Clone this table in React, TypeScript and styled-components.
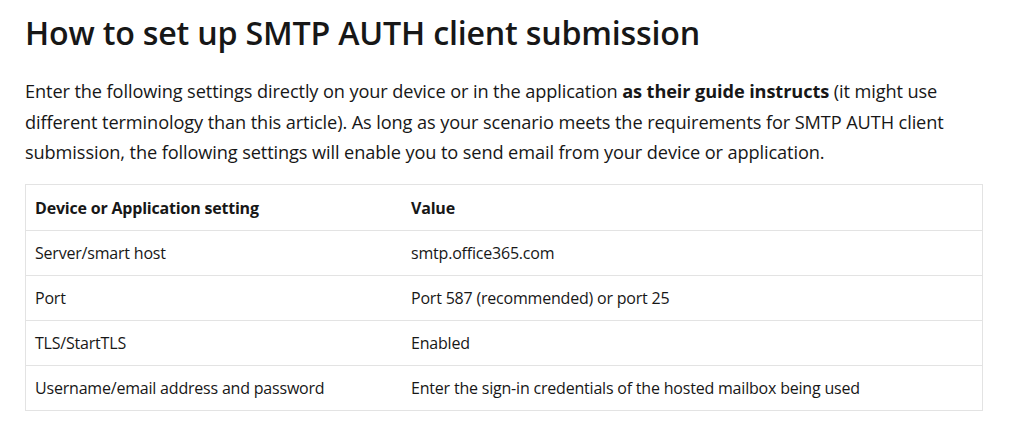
import React from "react";
import styled, { createGlobalStyle } from "styled-components";

const Global = createGlobalStyle`
  html, body { margin: 0; padding: 0; background: #ffffff; }
  body { font-family: "Open Sans", "Noto Sans", sans-serif; color: #171717; }
`;

const Page = styled.main`
  padding: 12px 24px 0 25px;
  width: 958px;
`;

const Title = styled.h1`
  margin: 0;
  font-size: 32.2px;
  font-weight: 600;
  line-height: 42px;
  letter-spacing: -0.2px;
  color: #171717;
`;

const Lead = styled.p`
  margin: 22px 0 0;
  font-size: 18.2px;
  line-height: 30.6px;
  letter-spacing: -0.11px;
  color: #171717;
`;

const Table = styled.table`
  margin-top: 16px;
  width: 958px;
  border-collapse: collapse;
  border: 1px solid #e3e3e3;
  font-size: 16px;
  line-height: 20px;
  letter-spacing: -0.2px;
`;

const Cell = styled.td<{ $w?: number }>`
  padding: 12px 10px 12px 9px;
  border-top: 1px solid #e3e3e3;
  text-align: left;
  vertical-align: top;
  ${(p) => (p.$w ? `width: ${p.$w}px;` : "")}
`;

const Head = styled(Cell).attrs({ as: "th" })`
  font-weight: 700;
  padding-top: 13px;
  padding-bottom: 12px;
`;

const rows: [string, string][] = [
  ["Server/smart host", "smtp.office365.com"],
  ["Port", "Port 587 (recommended) or port 25"],
  ["TLS/StartTLS", "Enabled"],
  ["Username/email address and password", "Enter the sign-in credentials of the hosted mailbox being used"],
];

export default function App() {
  return (
    <Page>
      <Global />
      <Title>How to set up SMTP AUTH client submission</Title>
      <Lead>
        Enter the following settings directly on your device or in the application{" "}
        <strong>as their guide instructs</strong> (it might use different terminology than
        this article). As long as your scenario meets the requirements for SMTP AUTH client
        submission, the following settings will enable you to send email from your device or
        application.
      </Lead>
      <Table>
        <thead>
          <tr>
            <Head $w={357}>Device or Application setting</Head>
            <Head>Value</Head>
          </tr>
        </thead>
        <tbody>
          {rows.map(([a, b]) => (
            <tr key={a}>
              <Cell>{a}</Cell>
              <Cell>{b}</Cell>
            </tr>
          ))}
        </tbody>
      </Table>
    </Page>
  );
}
